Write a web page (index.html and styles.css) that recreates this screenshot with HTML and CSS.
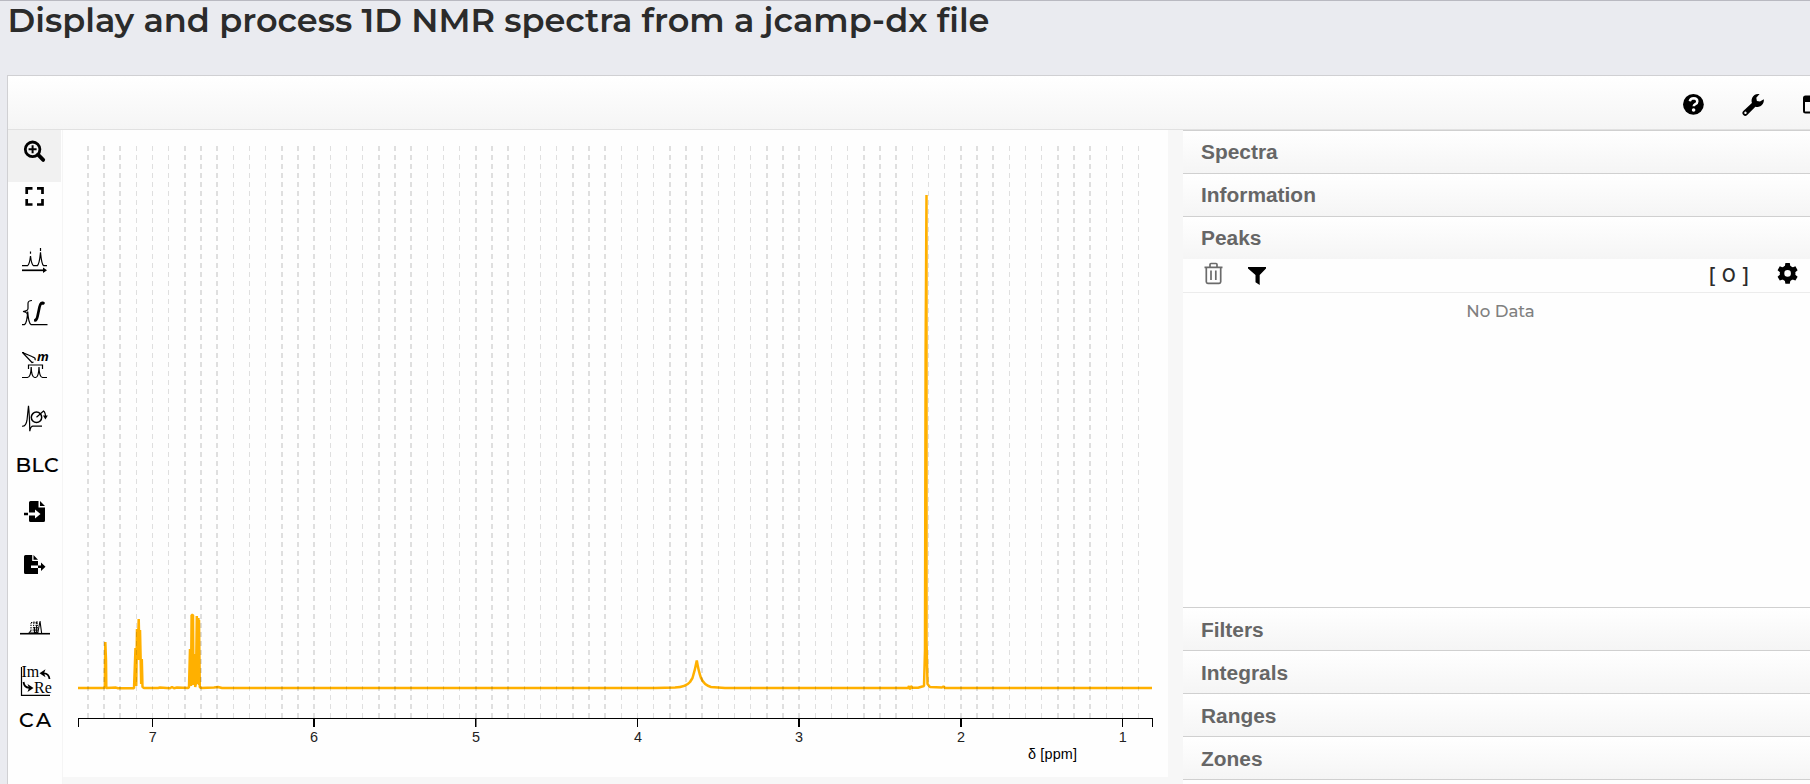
FILE: index.html
```html
<!DOCTYPE html>
<html lang="en">
<head>
<meta charset="utf-8">
<title>Display and process 1D NMR spectra</title>
<link rel="stylesheet" href="styles.css">
</head>
<body>
<h1 class="title"><span>Display and process 1D NMR spectra from a jcamp-dx file</span></h1>
<div class="app">
  <header class="topbar">
    <svg class="top-icons" viewBox="1680 76 130 53" width="130" height="53">
      <circle cx="1693.4" cy="104.4" r="10.4"/>
      <path d="M1689.8 101.2q.6-2.9 3.9-2.9 3.6.2 3.6 3.1 0 1.8-2 2.8-1.6.8-1.6 2.1" fill="none" stroke="#fff" stroke-width="2.5"/>
      <circle cx="1693.6" cy="110" r="1.8" fill="#fff"/>
      <path fill-rule="evenodd" d="M1763.8 99.200a6.800 6.800 0 0 1-8.400 7.600l-8.200 8.200a2.700 2.700 0 0 1-3.900-3.900l8.600-8.100a6.800 6.800 0 0 1 7.700-8.900l-3.300 3.600.6 3.200 3.100.6zM1745.4 111.600a1.200 1.200 0 1 0 .1 0z"/>
      <path fill-rule="evenodd" d="M1805.5 95.5h18v18h-18a2.500 2.500 0 0 1-2.500-2.500v-13a2.500 2.500 0 0 1 2.500-2.500zM1805 102v9.500h16v-9.500z"/>
    </svg>
  </header>
  <main class="workspace">
    <nav class="tools">
      <svg class="tool active" viewBox="8 130 53 52" width="53" height="52"><circle cx="32.6" cy="149.300" r="7.300" fill="none" stroke="#000" stroke-width="2.800"/><path d="M32.600 145.300v8M28.600 149.300h8" stroke="#000" stroke-width="2"/><path d="M38 154.700l5.200 5.200" stroke="#000" stroke-width="3.800" stroke-linecap="round"/></svg>
      <svg class="tool" viewBox="8 182 53 50" width="53" height="50"><path d="M26.700 194v-5.700h5.800M37 188.300h5.500v5.700M42.500 199v5.500H37M32.500 204.500h-5.800V199" fill="none" stroke="#000" stroke-width="2.700"/></svg>
      <svg class="tool line" viewBox="8 232 53 55" width="53" height="55"><path d="M22 265.700h5.500q2-1 3-9.700 1 8.700 3 9.700h3.800q2.200-2 3.200-13.500 1 11.500 3 13.500H47M30.500 251.500v2.300M40.500 248v3"/><path d="M22 270.300h23" stroke-width="1.700"/><path d="M43 267.500l4 2.800-4 2.800z" fill="#000" stroke="none"/></svg>
      <svg class="tool line" viewBox="8 287 53 52" width="53" height="52"><path d="M32 300.500q-4 0-4 3v5q0 2.500-5 3 4.500.5 4.500 4v3M22 324.600h2.500q2.500-1.500 3.200-13 .8 11.500 3.300 13h16.500"/><path d="M44 303.500q-3-2.500-4.500 3.500l-2 9.500q-1 4.500-3 3.500" stroke-width="2.700"/><circle cx="43" cy="303.200" r="1.500" fill="#000" stroke="none"/><circle cx="35.500" cy="320" r="1.500" fill="#000" stroke="none"/></svg>
      <svg class="tool line" viewBox="8 339 53 52" width="53" height="52"><path d="M22.500 352.500l9.500 10 1.500-.3M22.500 352.500l10 4.300q3.500 1 2.500 3.500"/><path d="M28.500 369v-4h14v4"/><path d="M22 377.500h5.500q3.500-.5 3.700-10.500.2 10 3.500 10.500h1q3-.5 3.300-10.500.2 10 3.500 10.500H47"/><text class="m" x="37" y="361.300">m</text></svg>
      <svg class="tool line" viewBox="8 391 53 52" width="53" height="52"><path d="M22 426.200q4 .5 5-6l1.500-14.500q1 9 1.300 25.500.8-5 3.200-5h9"/><circle cx="36.500" cy="417.300" r="5.200" stroke-width="1.500"/><path d="M36.500 417.300l7-6.300q2.200 1.500 2 7"/><path d="M43 415.500h4.800l-2.400 4z" fill="#000" stroke="none"/></svg>
      <svg class="tool" viewBox="8 443 53 44" width="53" height="44"><text class="word" x="15.500" y="471.500" textLength="43">BLC</text></svg>
      <svg class="tool" viewBox="8 487 53 52" width="53" height="52"><path d="M30.500 501h8v6.500H45v13a1.500 1.500 0 0 1-1.500 1.500h-13a1.500 1.500 0 0 1-1.500-1.500V515.500h6v3l5.500-4.500-5.500-4.500v3h-6V502.500a1.500 1.500 0 0 1 1.500-1.500zM40 501l5 5h-5zM24 512.800h4v2.400h-4z"/></svg>
      <svg class="tool" viewBox="8 539 53 61" width="53" height="61"><path d="M25.500 555h6.700v6H38v4.500h-7v2.600h7v5.900H25.500a1.500 1.500 0 0 1-1.500-1.500v-16a1.500 1.500 0 0 1 1.500-1.500zM33.500 555l4.500 4.700h-4.500zM38 565.600h3v-3l4.500 4.200-4.500 4.300v-3h-3z"/></svg>
      <svg class="tool line" viewBox="8 600 53 50" width="53" height="50"><path d="M20 633.700h30" stroke-width="1.600"/><path d="M37.800 633l2.200-12 1.600 12M28.500 633.500l2.500-3" stroke-width="1.100"/><path d="M31 633v-10M33 633l1-12M35.500 633l1-12M37.300 633v-12M31 622.500h7" stroke-width="1.100" stroke-dasharray="1.300 1"/><path d="M34.500 633v-6M36.600 633v-7" stroke-width="1"/></svg>
      <svg class="tool line" viewBox="8 650 53 54" width="53" height="54"><path d="M21.500 667v28.300H50"/><text class="serif" x="21.500" y="676.700">Im</text><text class="serif" x="34" y="692.700">Re</text><path d="M49.500 679q-.7-5.500-5.500-5.700M23.500 682q.8 5.500 5.500 5.800" stroke-width="1.800"/><path d="M39.500 673.300l6-4-1.500 4 1.500 4zM33.500 688l-6-4 1.500 4-1.500 4z" fill="#000" stroke="none"/></svg>
      <svg class="tool" viewBox="8 704 53 80" width="53" height="80"><text class="word" x="19" y="726.500" textLength="32">CA</text></svg>
    </nav>
    <section class="chart">
      <svg viewBox="63 130 1105 647" width="1105" height="647">
        <defs>
          <pattern id="grid" x="87" y="146" width="97" height="9" patternUnits="userSpaceOnUse">
            <path d="M0 0h2v5H0zM16 0h2v5h-2zM32 0h2v5h-2zM49 0h1v5h-1zM65 0h1v5h-1zM81 0h1v5h-1z" fill="#000" fill-opacity=".12"/>
          </pattern>
        </defs>
        <path class="spectrum" d="M78 688H104.800L105.300 642L106 660L106.300 688L116 687.600L118 688.200H134L135.500 648L136.200 686L137 629L137.600 660L138.700 619L139.600 660L140 630L141.200 684L141.800 659L142.500 687L144 688H158L160 687.500L170 688.200L172 687L174 688.200L177 687.500L188 688L189 687L190 649L191 686L191.600 615H193L193.500 685L194.200 654L195.200 687L196 683L196.800 616L197.600 684L198.400 618L199 685V620L199.800 687L201 688L214 687.600L218 687L222 688H655L675 687.500Q686 687 690 682L692.500 678Q695 670 696.800 660.500Q698.500 671 701 678Q704 685 711 687L725 688H908L909 686L910 689.500L911 686L912 687.700H918L924 686L925 650L925.600 354L926.500 195V640L927.500 684L930 687L942 687.600L943.500 686.500L945 688H1152"/>
        <rect x="87" y="146" width="1053" height="572" fill="url(#grid)"/>
        <path class="axis" d="M78 718h1075v9h-1v-8H79v8h-1zM152 719h1v8h-1zM313 719h2v8h-2zM475 719h1.500v8h-1.500zM637 719h1v8h-1zM798 719h2v8h-2zM960 719h2v8h-2zM1122 719h1v8h-1z"/>
        <g class="labels"><text x="152.700" y="741.700">7</text><text x="314" y="741.700">6</text><text x="476" y="741.700">5</text><text x="638" y="741.700">4</text><text x="799" y="741.700">3</text><text x="961" y="741.700">2</text><text x="1122.700" y="741.700">1</text></g>
        <text class="unit" x="1028" y="759" textLength="49">δ [ppm]</text>
      </svg>
    </section>
    <aside class="panels">
      <h2 class="upper">Spectra</h2>
      <h2 class="upper">Information</h2>
      <h2 class="upper">Peaks</h2>
      <div class="panel-tools">
        <svg viewBox="1183 259 100 33" width="100" height="33"><path d="M1204.500 267.300h18M1210 267v-2.500q0-1 1-1h5q1 0 1 1v2.500M1206.300 267.500v14.300q0 1.500 1.500 1.500h11.400q1.500 0 1.500-1.500v-14.300M1211 270.500v9.500M1215.800 270.500v9.500" fill="none" stroke="#6b6b6b" stroke-width="1.700"/><path d="M1248 267h18v1.500l-6.300 6.500v10l-4.200-2.800V275l-7.500-6.500z"/></svg>
        <span class="count">[ 0 ]</span>
        <svg class="gear" viewBox="1776 259 24 33" width="24" height="33"><g transform="translate(1787.600 273.400)"><circle r="5.600" fill="none" stroke="#000" stroke-width="4.600"/><path id="tooth" d="M-2.900-6.500l.7-3.800h4.400l.7 3.800zM-2.900 6.500l.7 3.800h4.400l.7-3.800z"/><use href="#tooth" transform="rotate(60)"/><use href="#tooth" transform="rotate(120)"/></g></svg>
      </div>
      <div class="empty">No Data</div>
      <h2>Filters</h2>
      <h2>Integrals</h2>
      <h2>Ranges</h2>
      <h2>Zones</h2>
      <div class="rest"></div>
    </aside>
  </main>
</div>
</body>
</html>
```
FILE: styles.css
```css
* { box-sizing: border-box; }
body { margin: 0; width: 1810px; height: 784px; overflow: hidden; background: #eaebf0; border-top: 1px solid #b9b9c1; font-family: Montserrat, Inter, "Open Sans", sans-serif; }
svg { display: block; }
.title { margin: 0; height: 74px; padding-left: 7.5px; color: #2b2b2b; font-size: 33.55px; line-height: 38px; font-weight: 600; white-space: nowrap; }
.app { margin-left: 7px; height: 709px; border: solid #d0d0d3; border-width: 1px 0 0 1px; background: #f7f7f7; }
.topbar { height: 54px; display: flex; justify-content: flex-end; background: linear-gradient(#fff, #f5f5f5); border-bottom: 1px solid #e1e1e1; }
.workspace { display: flex; height: 654px; }
.tools { width: 55px; background: #fefefe; border-right: 1px solid #f5f5f5; flex: none; }
.active { background: #f1f1f1; }
.line { fill: none; stroke: #000; stroke-width: 1.2; }
.line text { fill: #000; stroke: none; }
.m { font: italic bold 13px "Open Sans", sans-serif; }
.serif { font: 16px "Liberation Serif", serif; }
.word { font-size: 20.5px; font-weight: 550; stroke: #000; stroke-width: .2; }
.chart { width: 1105px; height: 647px; background: #fefefe; flex: none; }
.spectrum { fill: none; stroke: #ffb000; stroke-width: 2.5; stroke-linejoin: bevel; }
.labels { font: 14.4px "Liberation Sans", Arial, sans-serif; text-anchor: middle; fill: #222; }
.unit { font: 14.4px "Liberation Sans", Arial, sans-serif; fill: #000; }
.panels { flex: 1; min-width: 0; margin-left: 15px; background: #fefefe; }
.panels h2 { margin: 0; height: 43px; padding-left: 18px; border-top: 1px solid #d0d0d0; background: linear-gradient(#fff, #f5f5f5); color: #666; font: bold 20.9px/43px "Liberation Sans", Arial, sans-serif; }
.panels .upper { line-height: 41px; }
.panel-tools { height: 34px; display: flex; border-bottom: 1px solid #ececec; }
.count { margin-left: auto; margin-right: 26px; color: #2b2b2b; font-size: 21px; line-height: 32px; font-weight: 500; letter-spacing: 0.5px; }
.gear { margin-right: 10px; }
.empty { height: 314px; padding: 7px 0 0 8px; text-align: center; color: #808080; font-size: 16.6px; line-height: 22px; font-weight: 500; }
.rest { height: 5px; border-top: 1px solid #d0d0d0; }
```
